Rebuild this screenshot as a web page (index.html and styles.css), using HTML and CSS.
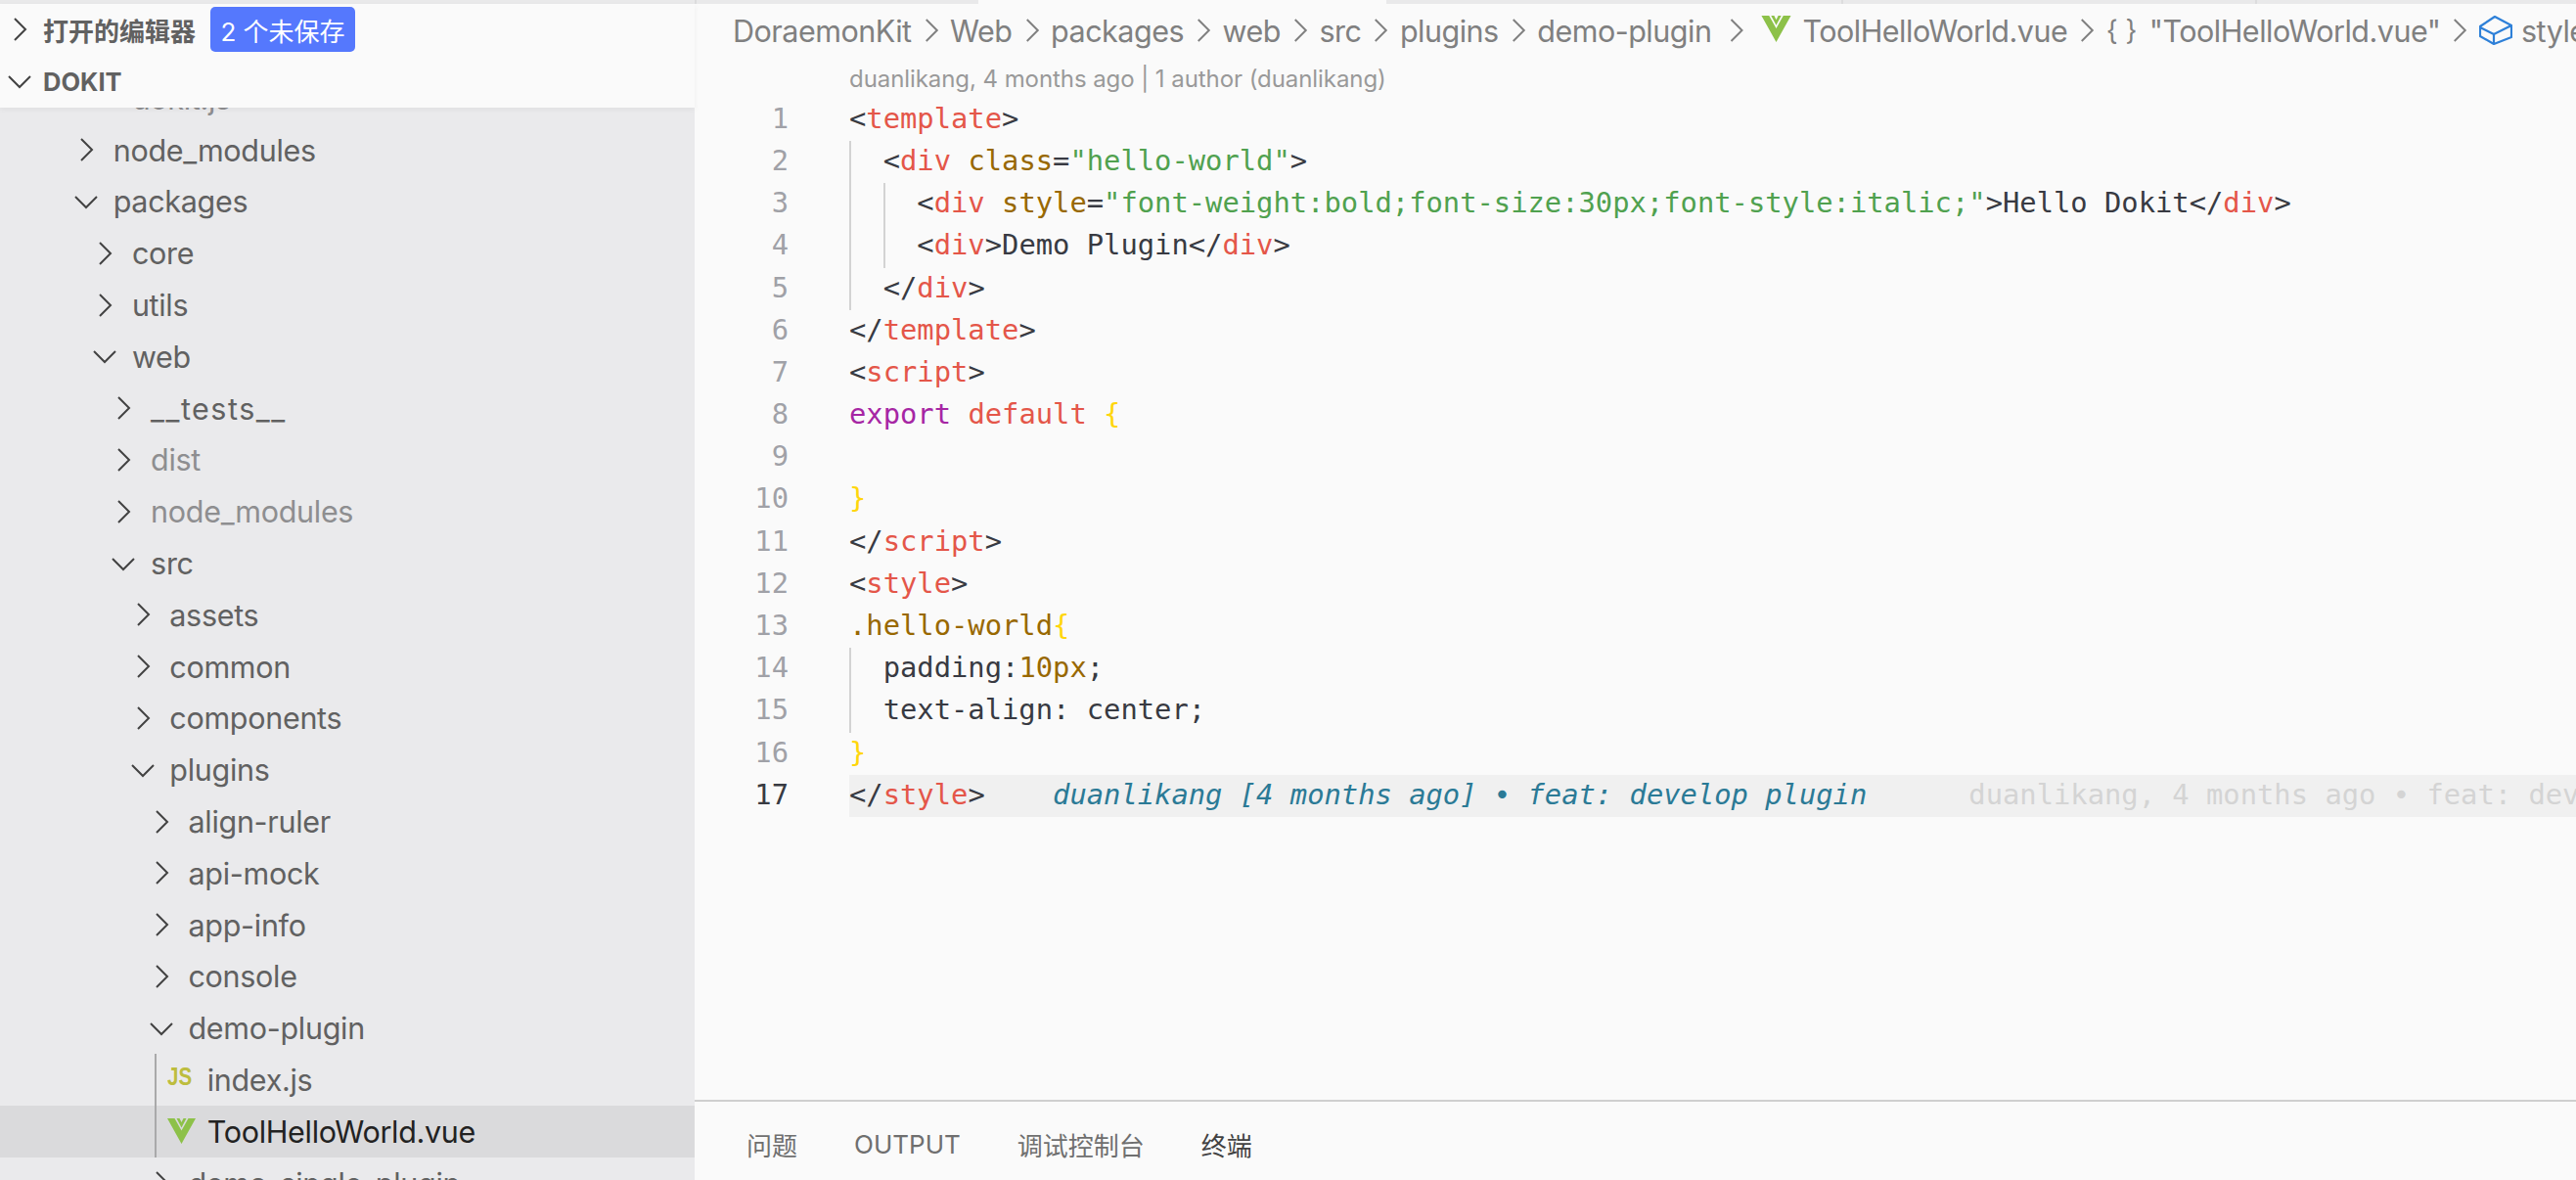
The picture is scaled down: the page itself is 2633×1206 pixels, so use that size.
FILE: index.html
```html
<!DOCTYPE html>
<html lang="zh-CN">
<head>
<meta charset="utf-8">
<title>ToolHelloWorld.vue - Dokit</title>
<link rel="stylesheet" href="styles.css">
</head>
<body>
<svg class="defs" aria-hidden="true">
  <symbol id="r" viewBox="0 0 26 26"><path d="M8 2 L19 13 L8 24" fill="none" stroke="currentColor" stroke-width="2"/></symbol>
  <symbol id="d" viewBox="0 0 26 26"><path d="M2 8 L13 19 L24 8" fill="none" stroke="currentColor" stroke-width="2"/></symbol>
  <symbol id="v" viewBox="0 0 29 26"><path d="M0 0h7.5L14.5 12.5 21.500 0H29L14.500 26z" fill="#8dc149"/><path d="M9.500 0h3l2 4 2-4h3L14.500 9.500z" fill="#8dc149"/></symbol>
  <symbol id="b" viewBox="0 0 34 30"><path d="M16 1 L33 10 V22 L15 29 L1 21 V11 Z M1 12 L15 19 L33 10 M15 19 V29" fill="none" stroke="#2e80d8" stroke-width="2.200" stroke-linejoin="round"/></symbol>
</svg>

<div class="tabstrip">
  <div class="strip s1"></div>
  <div class="strip s2"></div>
  <div class="strip s3"></div>
  <div class="strip s4"></div>
  <div class="strip s5"></div>
  <div class="strip s6"></div>
</div>

<div class="main">
  <aside class="sidebar">
    <header class="side-head">
      <div class="sec sec-open">
        <svg class="chev sec-chev"><use href="#r"/></svg>
        <span class="sec-title">打开的编辑器</span>
        <span class="badge">2 个未保存</span>
      </div>
      <div class="sec sec-root">
        <svg class="chev sec-chev"><use href="#d"/></svg>
        <span class="sec-title">DOKIT</span>
      </div>
    </header>
    <div class="tree">
      <div class="list">
        <div class="row l1 dim"><span class="tw"></span><span>dokit.js</span></div>
        <div class="row l0"><svg class="chev tw"><use href="#r"/></svg><span>node_modules</span></div>
        <div class="row l0"><svg class="chev tw"><use href="#d"/></svg><span>packages</span></div>
        <div class="row l1"><svg class="chev tw"><use href="#r"/></svg><span>core</span></div>
        <div class="row l1"><svg class="chev tw"><use href="#r"/></svg><span>utils</span></div>
        <div class="row l1"><svg class="chev tw"><use href="#d"/></svg><span>web</span></div>
        <div class="row l2"><svg class="chev tw"><use href="#r"/></svg><span class="us">__tests__</span></div>
        <div class="row l2 dim"><svg class="chev tw"><use href="#r"/></svg><span>dist</span></div>
        <div class="row l2 dim"><svg class="chev tw"><use href="#r"/></svg><span>node_modules</span></div>
        <div class="row l2"><svg class="chev tw"><use href="#d"/></svg><span>src</span></div>
        <div class="row l3"><svg class="chev tw"><use href="#r"/></svg><span>assets</span></div>
        <div class="row l3"><svg class="chev tw"><use href="#r"/></svg><span>common</span></div>
        <div class="row l3"><svg class="chev tw"><use href="#r"/></svg><span>components</span></div>
        <div class="row l3"><svg class="chev tw"><use href="#d"/></svg><span>plugins</span></div>
        <div class="row l4"><svg class="chev tw"><use href="#r"/></svg><span>align-ruler</span></div>
        <div class="row l4"><svg class="chev tw"><use href="#r"/></svg><span>api-mock</span></div>
        <div class="row l4"><svg class="chev tw"><use href="#r"/></svg><span>app-info</span></div>
        <div class="row l4"><svg class="chev tw"><use href="#r"/></svg><span>console</span></div>
        <div class="row l4"><svg class="chev tw"><use href="#d"/></svg><span>demo-plugin</span></div>
        <div class="row l5 guided"><span class="tw js">JS</span><span>index.js</span></div>
        <div class="row l5 guided selected"><svg class="tw vue"><use href="#v"/></svg><span>ToolHelloWorld.vue</span></div>
        <div class="row l4"><svg class="chev tw"><use href="#r"/></svg><span>demo-single-plugin</span></div>
      </div>
    </div>
  </aside>

  <section class="editor">
    <nav class="crumbs">
      <span>DoraemonKit</span><svg class="sep"><use href="#r"/></svg>
      <span>Web</span><svg class="sep"><use href="#r"/></svg>
      <span>packages</span><svg class="sep"><use href="#r"/></svg>
      <span>web</span><svg class="sep"><use href="#r"/></svg>
      <span>src</span><svg class="sep"><use href="#r"/></svg>
      <span>plugins</span><svg class="sep"><use href="#r"/></svg>
      <span>demo-plugin</span><svg class="sep sep-wide"><use href="#r"/></svg>
      <svg class="crumb-vue"><use href="#v"/></svg>
      <span>ToolHelloWorld.vue</span><svg class="sep"><use href="#r"/></svg>
      <span class="braces">{ }</span>
      <span>"ToolHelloWorld.vue"</span><svg class="sep"><use href="#r"/></svg>
      <svg class="crumb-box"><use href="#b"/></svg>
      <span>style</span>
    </nav>
    <div class="lens">duanlikang, 4 months ago | 1 author (duanlikang)</div>
    <div class="code">
      <div class="line"><span class="ln">1</span><span class="tx"><i class="p">&lt;</i><i class="t">template</i><i class="p">&gt;</i></span></div>
      <div class="line"><span class="ln">2</span><span class="tx"><b class="g"></b><i class="p">&lt;</i><i class="t">div</i> <i class="a">class</i><i class="p">=</i><i class="s">"hello-world"</i><i class="p">&gt;</i></span></div>
      <div class="line"><span class="ln">3</span><span class="tx"><b class="g"></b><b class="g"></b><i class="p">&lt;</i><i class="t">div</i> <i class="a">style</i><i class="p">=</i><i class="s">"font-weight:bold;font-size:30px;font-style:italic;"</i><i class="p">&gt;Hello Dokit&lt;/</i><i class="t">div</i><i class="p">&gt;</i></span></div>
      <div class="line"><span class="ln">4</span><span class="tx"><b class="g"></b><b class="g"></b><i class="p">&lt;</i><i class="t">div</i><i class="p">&gt;Demo Plugin&lt;/</i><i class="t">div</i><i class="p">&gt;</i></span></div>
      <div class="line"><span class="ln">5</span><span class="tx"><b class="g"></b><i class="p">&lt;/</i><i class="t">div</i><i class="p">&gt;</i></span></div>
      <div class="line"><span class="ln">6</span><span class="tx"><i class="p">&lt;/</i><i class="t">template</i><i class="p">&gt;</i></span></div>
      <div class="line"><span class="ln">7</span><span class="tx"><i class="p">&lt;</i><i class="t">script</i><i class="p">&gt;</i></span></div>
      <div class="line"><span class="ln">8</span><span class="tx"><i class="k">export</i> <i class="t">default</i> <i class="y">{</i></span></div>
      <div class="line"><span class="ln">9</span><span class="tx"></span></div>
      <div class="line"><span class="ln">10</span><span class="tx"><i class="y">}</i></span></div>
      <div class="line"><span class="ln">11</span><span class="tx"><i class="p">&lt;/</i><i class="t">script</i><i class="p">&gt;</i></span></div>
      <div class="line"><span class="ln">12</span><span class="tx"><i class="p">&lt;</i><i class="t">style</i><i class="p">&gt;</i></span></div>
      <div class="line"><span class="ln">13</span><span class="tx"><i class="a">.hello-world</i><i class="y">{</i></span></div>
      <div class="line"><span class="ln">14</span><span class="tx"><b class="g"></b><i class="p">padding:</i><i class="a">10px</i><i class="p">;</i></span></div>
      <div class="line"><span class="ln">15</span><span class="tx"><b class="g"></b><i class="p">text-align: center;</i></span></div>
      <div class="line"><span class="ln">16</span><span class="tx"><i class="y">}</i></span></div>
      <div class="line current"><span class="ln">17</span><span class="tx"><i class="p">&lt;/</i><i class="t">style</i><i class="p">&gt;</i>    <i class="blame">duanlikang [4 months ago] • feat: develop plugin</i>      <i class="ghost">duanlikang, 4 months ago • feat: develop plugin</i></span></div>
    </div>
    <footer class="panel">
      <span>问题</span>
      <span>OUTPUT</span>
      <span>调试控制台</span>
      <span class="active">终端</span>
    </footer>
  </section>
</div>
</body>
</html>
```

FILE: styles.css
```css
* { box-sizing: border-box; }
html, body { margin: 0; height: 100%; }
body {
  width: 2633px;
  height: 1206px;
  overflow: hidden;
  background: #fafafa;
  font-family: Inter, "Noto Sans CJK SC", sans-serif;
  display: flex;
  flex-direction: column;
}
.defs { display: none; }

.tabstrip { display: flex; height: 4px; flex: none; background: #e9e9ea; }
.strip { border-right: 2px solid #dcdcdd; }
.s1 { width: 712px; }
.s2 { width: 288px; border-right: 0; }
.s3 { width: 417px; background: #fafafa; border-right: 0; }
.s4 { width: 467px; }
.s5 { width: 423px; }
.s6 { flex: 1; border-right: 0; }

.main { flex: 1; display: flex; min-height: 0; }

.sidebar { width: 710px; flex: none; display: flex; flex-direction: column; background: #eaeaec; min-height: 0; }
.side-head {
  position: relative;
  z-index: 1;
  flex: none;
  height: 106px;
  background: #fafafa;
  box-shadow: 0 2px 6px rgba(0, 0, 0, .05);
}
.sec { display: flex; align-items: center; color: #616161; }
.sec-open { height: 52px; }
.sec-root { height: 54px; }
.sec-chev { width: 26px; height: 26px; margin-left: 7px; margin-right: 11px; color: #424242; flex: none; }
.sec-title { font-size: 26px; font-weight: 700; letter-spacing: 0; }
.sec-root .sec-title { font-size: 25.500px; }
.badge {
  margin-left: 15px;
  width: 148px;
  height: 46px;
  border-radius: 5px;
  background: #5578fd;
  color: #fff;
  font-size: 26px;
  display: flex;
  align-items: center;
  justify-content: center;
  white-space: pre;
}

.tree { flex: 1; min-height: 0; overflow: hidden; }
.list { margin-top: -36px; }
.row {
  position: relative;
  display: flex;
  align-items: center;
  height: 52.800px;
  font-size: 30.500px;
  letter-spacing: -.3px;
  color: #616161;
  white-space: nowrap;
}
.row.dim { color: #8e8e90; }
.row .us { letter-spacing: 1.500px; }
.l0 { padding-left: 75px; }
.l1 { padding-left: 94.200px; }
.l2 { padding-left: 113.400px; }
.l3 { padding-left: 132.600px; }
.l4 { padding-left: 151.800px; }
.l5 { padding-left: 171px; }
.tw { flex: none; width: 26px; height: 26px; margin-right: 14.700px; }
.chev { color: #424242; }
.vue { width: 29px; margin-right: 11.700px; }
.js {
  color: #bdbd3e;
  font: 700 25px/26px "Liberation Sans", sans-serif;
  letter-spacing: 0;
  transform: scaleX(.82);
  transform-origin: left center;
  margin-top: -8px;
}
.guided::before {
  content: "";
  position: absolute;
  left: 158px;
  top: 0;
  bottom: 0;
  width: 2px;
  background: #a9a9aa;
}
.selected { background: #dadadc; }
.row.selected { color: #222; }

.editor { flex: 1; min-width: 0; display: flex; flex-direction: column; }
.crumbs {
  flex: none;
  height: 54px;
  padding-left: 39px;
  display: flex;
  align-items: center;
  font-size: 30.500px;
  letter-spacing: -.5px;
  color: #808080;
  white-space: nowrap;
  overflow: hidden;
}
.crumbs > * { flex: none; }
.sep { width: 39.500px; height: 26px; color: #808080; }
.sep-wide { width: 51px; }
.crumb-vue { width: 31px; height: 27px; margin-right: 11px; margin-top: -4px; }
.crumb-box { width: 34px; height: 30px; margin-right: 9px; }
.braces { width: 30px; margin-right: 14px; letter-spacing: 0; white-space: pre; font-size: 28px; }

.lens {
  flex: none;
  height: 42.800px;
  padding-top: 2px;
  padding-left: 158px;
  display: flex;
  align-items: center;
  font-size: 24px;
  letter-spacing: -.07px;
  color: #999;
  white-space: nowrap;
}

.code {
  flex: 1;
  min-height: 0;
  font-family: "DejaVu Sans Mono", monospace;
  font-size: 28.800px;
  line-height: 41.200px;
  overflow: hidden;
}
.line { display: flex; height: 43.200px; white-space: pre; }
.ln { flex: none; width: 158px; padding-right: 62px; text-align: right; color: #a0a1a7; }
.tx { flex: 1; min-width: 0; overflow: hidden; color: #383a42; }
.current .ln { color: #383a42; }
.current .tx { background: #f0f0f0; }
.tx i { font-style: normal; }
.g {
  display: inline-block;
  width: 2ch;
  height: 43.200px;
  vertical-align: top;
  border-left: 2px solid #d3d3d3;
}
.p { color: #383a42; }
.t { color: #e45649; }
.a { color: #986801; }
.s { color: #50a14f; }
.k { color: #a626a4; }
.y { color: #ffd60a; }
.tx .blame { color: #2b7a96; font-style: italic; }
.ghost { color: #d4d4d4; }

.panel {
  flex: none;
  height: 82px;
  border-top: 2px solid #cfcfcf;
  padding-left: 53px;
  display: flex;
  align-items: center;
  gap: 58px;
  font-size: 26px;
  color: #6f6f6f;
  padding-top: 6px;
}
.panel .active { color: #424242; }
```
